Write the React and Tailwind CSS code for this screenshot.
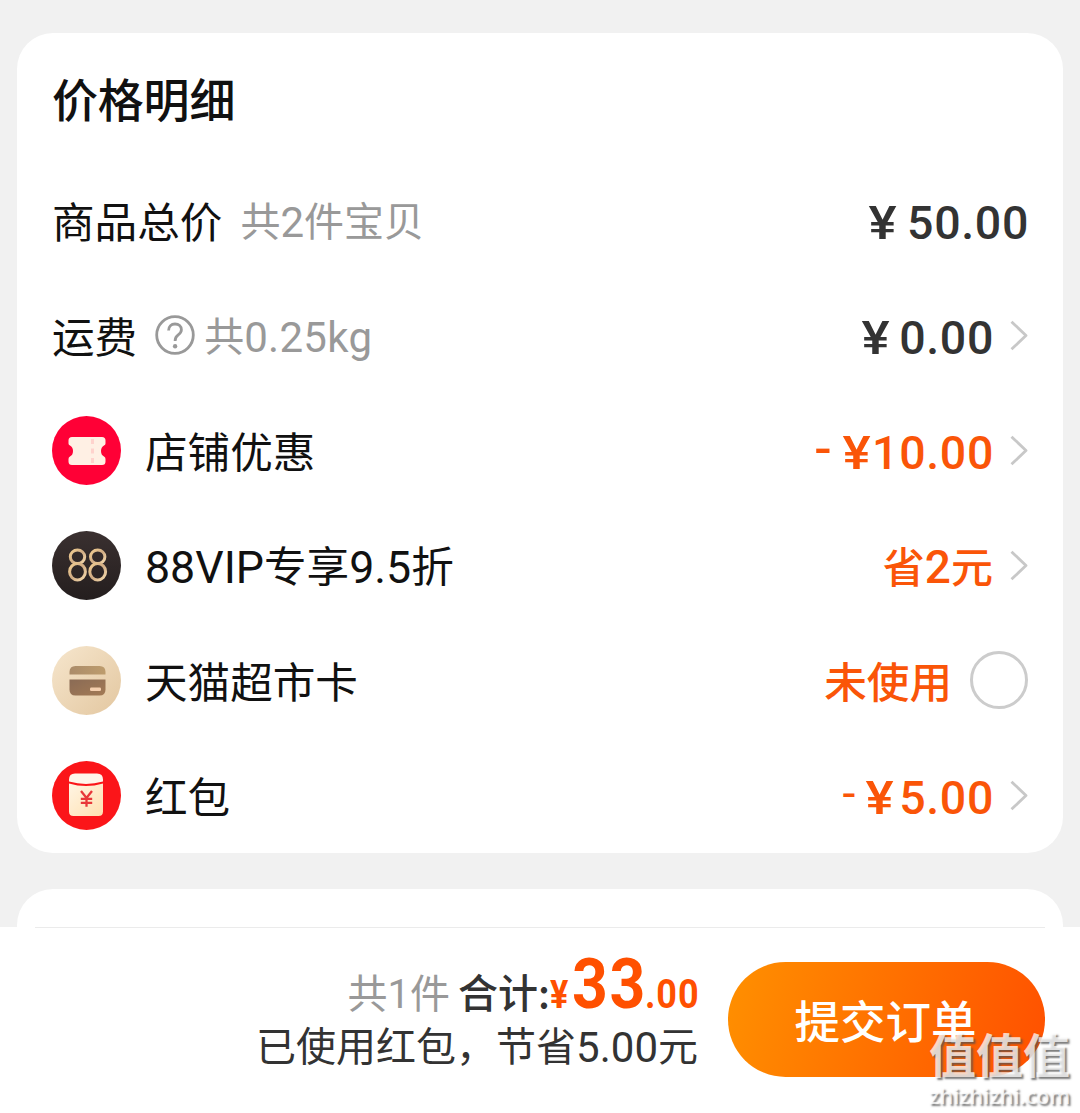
import React from "react";

const Chevron = () => (
  <svg className="ml-[17px] h-[32px] w-[18px] shrink-0" viewBox="0 0 18 32" fill="none">
    <path d="M1.500 1.700 L16 15.500 L1.500 29.300" stroke="#c8c8c8" strokeWidth="2.800" strokeLinejoin="round" />
  </svg>
);

const Help = () => (
  <svg className="mb-[1px] ml-[18px] h-[40px] w-[40px] shrink-0" viewBox="0 0 40 40" fill="none" stroke="#999" strokeWidth="2.8">
    <circle cx="20" cy="20" r="18.3" />
    <path d="M13.6 15.4 C13.6 11.3 16.3 9 20 9 C23.8 9 26.4 11.4 26.4 14.8 C26.4 17.3 25 18.6 23.2 19.9 C21.2 21.3 20.1 22.5 20.1 26" />
    <circle cx="20.1" cy="31.300" r="2.2" fill="#999" stroke="none" />
  </svg>
);

const Coupon = () => (
  <svg className="h-[69px] w-[69px]" viewBox="0 0 69 69">
    <circle cx="34.5" cy="34.5" r="34.5" fill="#ff0036" />
    <path d="M20 21 H50 Q53.5 21 53.5 24.500 V27.500 Q53.500 29 52 29.500 Q49 31 49 35 Q49 39 52 40.500 Q53.500 41 53.500 43 V45.500 Q53.500 49 50 49 H20 Q16.500 49 16.500 45.500 V43 Q16.500 41 18 40.500 Q21 39 21 35 Q21 31 18 29.500 Q16.500 29 16.500 27.500 V24.500 Q16.500 21 20 21 Z" fill="#fff0e4" />
    <path d="M40.500 23 V47" stroke="#ffd3cd" strokeWidth="3" strokeDasharray="5 4.500" />
  </svg>
);

const Vip = () => (
  <svg className="h-[69px] w-[69px]" viewBox="0 0 69 69" fill="none">
    <defs>
      <linearGradient id="gold" x1="0" y1="0" x2="1" y2="1">
        <stop offset="0" stopColor="#f3cf92" />
        <stop offset=".5" stopColor="#cfab84" />
        <stop offset="1" stopColor="#f7dcae" />
      </linearGradient>
      <linearGradient id="night" x1="0" y1="0" x2="0" y2="1">
        <stop offset="0" stopColor="#3a3030" />
        <stop offset="1" stopColor="#241e1e" />
      </linearGradient>
    </defs>
    <circle cx="34.5" cy="34.5" r="34.5" fill="url(#night)" />
    <g stroke="url(#gold)" strokeWidth="3">
      <ellipse cx="25.500" cy="25.800" rx="7.200" ry="6.800" />
      <ellipse cx="25.500" cy="40.700" rx="7.900" ry="8.200" />
      <ellipse cx="45.700" cy="25.800" rx="7.200" ry="6.800" />
      <ellipse cx="45.700" cy="40.700" rx="7.900" ry="8.200" />
    </g>
  </svg>
);

const Card = () => (
  <svg className="h-[69px] w-[69px]" viewBox="0 0 69 69">
    <defs>
      <linearGradient id="sand" x1="0" y1="0" x2="1" y2="1">
        <stop offset="0" stopColor="#f6e6cd" />
        <stop offset="1" stopColor="#e3c7a0" />
      </linearGradient>
      <linearGradient id="flap" x1="0" y1="0" x2="1" y2="0">
        <stop offset="0" stopColor="#ab8c6a" />
        <stop offset="1" stopColor="#bd9c6d" />
      </linearGradient>
      <linearGradient id="body" x1="0" y1="0" x2="1" y2="1">
        <stop offset="0" stopColor="#8a6b55" />
        <stop offset="1" stopColor="#a37a55" />
      </linearGradient>
    </defs>
    <circle cx="34.5" cy="34.5" r="34.5" fill="url(#sand)" />
    <path d="M17.500 28.500 V26 Q17.500 20 23.500 20 H47.500 Q53.500 20 53.500 26 V28.500 Z" fill="url(#flap)" />
    <path d="M17.500 33.500 H53.500 V43.500 Q53.500 49.500 47.500 49.500 H23.500 Q17.500 49.500 17.500 43.500 Z" fill="url(#body)" />
    <rect x="38" y="41.500" width="11" height="3.400" rx="1.200" fill="#f5cfae" />
  </svg>
);

const RedPacket = () => (
  <svg className="h-[69px] w-[69px]" viewBox="0 0 69 69" fill="none">
    <defs>
      <linearGradient id="cream" x1="0" y1="0" x2="1" y2="1">
        <stop offset="0" stopColor="#fff5e4" />
        <stop offset="1" stopColor="#ffe0b0" />
      </linearGradient>
    </defs>
    <circle cx="34.5" cy="34.5" r="34.5" fill="#fb1519" />
    <path d="M17 22.500 Q34 27.500 51 22.500 V50.500 Q51 55 46.500 55 H21.500 Q17 55 17 50.500 Z" fill="url(#cream)" />
    <path d="M17 20.500 V18.500 Q17 12.500 23 12.500 H45 Q51 12.500 51 18.500 V20.500 Q34 25.300 17 20.500 Z" fill="#fff5ea" />
    <path d="M29 30 L34.500 37 L40 30 M34.500 37 V45.800 M28.800 37.800 H40.200 M28.800 41.800 H40.200" stroke="#e8383a" strokeWidth="2.300" />
  </svg>
);

const Row = ({ icon, label, children }) => (
  <div className="flex h-[115px] items-center">
    {icon && <span className="mr-[24px] shrink-0">{icon}</span>}
    <span className="flex flex-1 items-center text-[42.6px] text-[#111]">{label}</span>
    <span className="flex items-center font-medium">{children}</span>
  </div>
);

const Txt = ({ className = "mb-[2px]", children }) => (
  <span className={"block whitespace-pre leading-[60px] " + className}>{children}</span>
);

const Latin = ({ className, children }) => (
  <span className={"inline-block align-[-1px] font-['Roboto'] leading-[50px] " + className}>{children}</span>
);

const Price = ({ minus, gap, className, children }) => (
  <span className={"flex items-center pt-[4px] font-['Roboto'] text-[46.5px] leading-[60px] " + className}>
    {minus}
    <span className={"inline-block origin-right scale-x-[1.14] " + gap}>¥</span>
    <span className="-mr-px tracking-[0.65px]">{children}</span>
  </span>
);

export default function App() {
  return (
    <div className="relative flex h-[1113px] w-[1080px] flex-col overflow-hidden bg-[#f1f1f1] font-['Noto_Sans_CJK_SC',sans-serif]">
      <section className="mx-[17px] mt-[33px] h-[820px] rounded-[36px] bg-white px-[35px]">
        <h2 className="h-[130px] pt-[32px] text-[46px] font-medium leading-[64px] tracking-[-0.2px] text-[#111]">价格明细</h2>
        <Row
          label={
            <>
              <Txt>商品总价</Txt>
              <Txt className="mb-[3px] ml-[18px] text-[40px] text-[#999]">共<Latin className="text-[42px]">2</Latin>件宝贝</Txt>
            </>
          }
        >
          <Price gap="mr-[10px]" className="text-[#333]">50.00</Price>
        </Row>
        <Row
          label={
            <>
              <Txt>运费</Txt>
              <Help />
              <Txt className="mb-[3px] ml-[9px] text-[40px] text-[#999]">共<Latin className="text-[42px] tracking-[0.3px]">0.25kg</Latin></Txt>
            </>
          }
        >
          <Price gap="mr-[9px]" className="text-[#333]">0.00</Price>
          <Chevron />
        </Row>
        <Row icon={<Coupon />} label={<Txt>店铺优惠</Txt>}>
          <Price minus={<span className="-mt-[7px] mr-[14px] w-[17px] scale-x-110">-</span>} gap="mr-[1px]" className="text-[#fa5508]">10.00</Price>
          <Chevron />
        </Row>
        <Row
          icon={<Vip />}
          label={<Txt className="mb-[3px]"><Latin className="text-[44.700px]">88VIP</Latin>专享<Latin className="text-[44.700px]">9.5</Latin>折</Txt>}
        >
          <Txt className="text-[42px] text-[#fa5508]">省<span className="font-['Roboto'] text-[46px]">2</span>元</Txt>
          <Chevron />
        </Row>
        <Row icon={<Card />} label={<Txt>天猫超市卡</Txt>}>
          <Txt className="mb-[2px] text-[42.6px] text-[#fa5508]">未使用</Txt>
          <span className="mb-[1px] ml-[18px] h-[58px] w-[58px] rounded-full border-[3px] border-[#ccc]" />
        </Row>
        <Row icon={<RedPacket />} label={<Txt>红包</Txt>}>
          <Price minus={<span className="-mt-[10px] mr-[11px] w-[16px] font-normal">-</span>} gap="mr-[5px]" className="text-[#fa5508]">5.00</Price>
          <Chevron />
        </Row>
      </section>
      <section className="mx-[17px] mt-[36px] h-[38px] shrink-0 rounded-t-[36px] bg-white" />
      <footer className="flex flex-1 flex-col bg-white">
        <div className="mx-[35px] h-px bg-[#ebebeb]" />
        <div className="flex justify-end pr-[35px]">
          <div className="mr-[30px] flex flex-col items-end pt-[24px]">
            <div className="flex h-[63px] items-baseline whitespace-pre leading-[64px]">
              <span className="text-[40px] text-[#999]">共<span className="font-['Roboto']">1</span>件</span>
              <span className="ml-[8px] text-[40px] font-medium text-[#333]">合计:</span>
              <span className="w-[22px] origin-left scale-x-[0.9] font-['Roboto'] text-[38px] font-bold text-[#ff5000]">¥</span>
              <span className="w-[73px] origin-left scale-x-[0.88] font-['Roboto'] text-[71px] font-bold tracking-[2px] text-[#ff5000]">33</span>
              <span className="w-[53px] origin-left scale-x-[0.9] font-['Roboto'] text-[40px] font-bold tracking-[1px] text-[#ff5000]">.00</span>
            </div>
            <div className="whitespace-pre text-[40px] leading-[58px] text-[#333]">
              已使用红包，节省<Latin className="text-[42px]">5.00</Latin>元
            </div>
          </div>
          <button className="mt-[34px] h-[115px] w-[317px] rounded-full bg-linear-[105deg,#ff9000,#ff5000] pr-[2px] text-[45.500px] font-medium leading-[115px] text-white">
            提交订单
          </button>
        </div>
      </footer>
      <div className="absolute left-[929px] top-[1021px] w-[150px] text-white/75 [text-shadow:2px_2px_2px_rgba(80,80,80,0.75)]">
        <div className="whitespace-nowrap text-[47px] font-bold leading-[64px]">值值值</div>
        <div className="whitespace-nowrap font-['Open_Sans'] text-[21.700px] font-semibold leading-[22px]">zhizhizhi.com</div>
      </div>
    </div>
  );
}
